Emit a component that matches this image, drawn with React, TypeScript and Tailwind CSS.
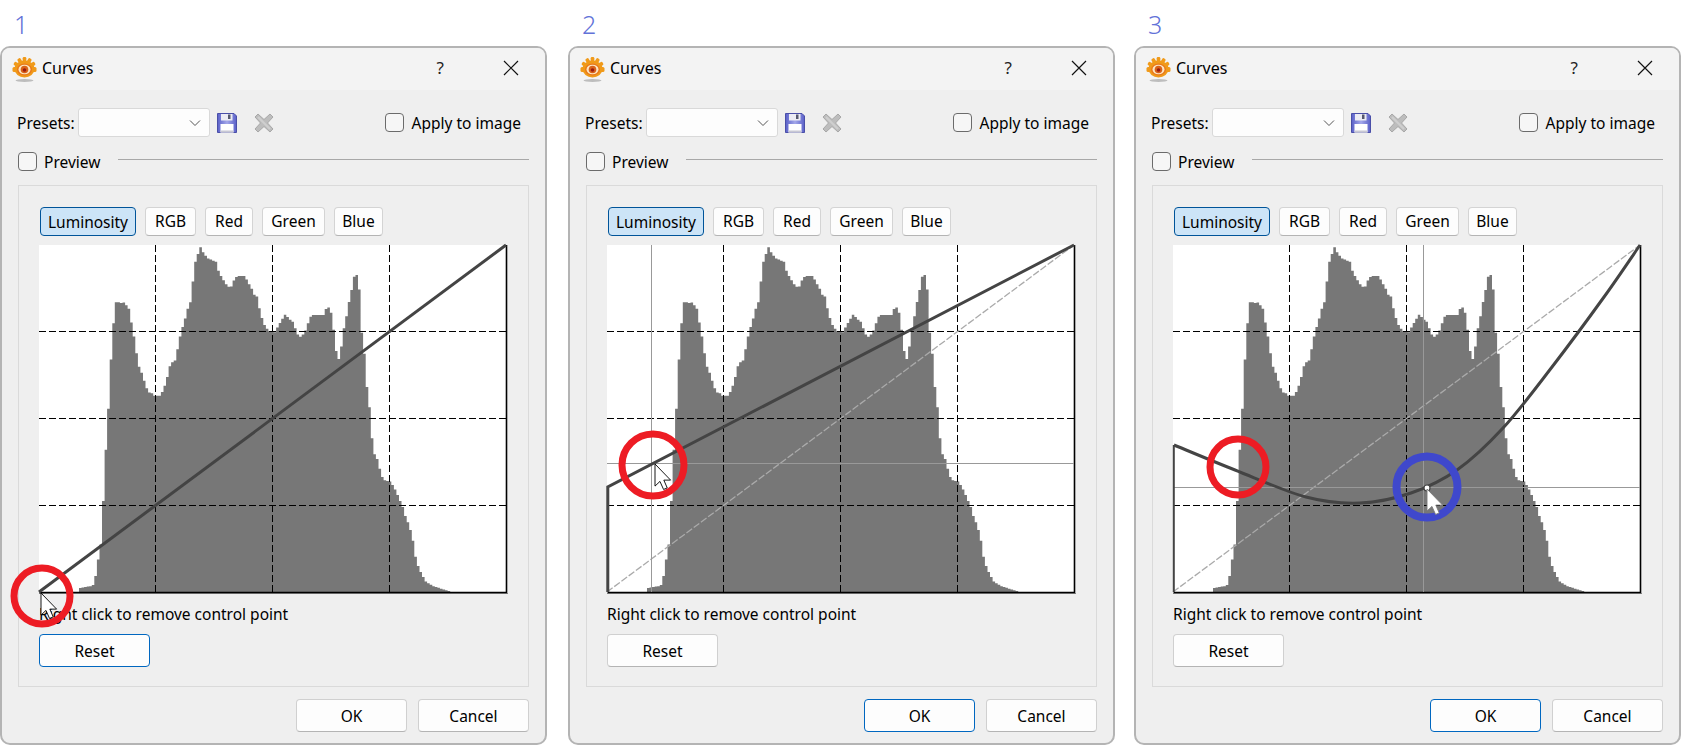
import React from "react";

// histogram outline read off the reference, [x, y] inside a 467x347 plot
const rawHistogram: [number, number][] = [
  [210,1087],[215,1075],[225,1072],[250,1068],[258,1060],[262,1020],[268,985],[275,940],[280,850],[285,740],[290,635],[297,520],[302,410],[307,320],[312,260],[315,217],[330,217],[335,222],[340,216],[345,225],[352,228],[358,265],[365,300],[372,350],[380,405],[390,430],[400,465],[408,487],[420,490],[425,497],[440,497],[450,480],[460,445],[470,400],[485,390],[492,340],[500,305],[510,270],[518,237],[526,215],[533,150],[541,85],[550,65],[556,45],[562,70],[575,85],[590,92],[597,95],[605,125],[615,145],[630,170],[640,170],[650,145],[658,138],[680,138],[685,155],[695,170],[705,195],[712,200],[720,240],[730,280],[745,303],[762,307],[768,295],[780,272],[792,252],[800,265],[812,275],[825,310],[830,323],[840,315],[850,298],[860,262],[868,255],[900,255],[908,228],[915,235],[922,255],[928,310],[937,390],[945,385],[952,310],[960,275],[968,225],[980,165],[985,135],[993,135],[1000,190],[1002,275],[1008,330],[1015,390],[1018,455],[1025,510],[1030,560],[1035,635],[1040,670],[1050,690],[1060,735],[1068,750],[1085,755],[1095,770],[1108,800],[1120,830],[1128,860],[1138,885],[1148,925],[1155,975],[1162,1005],[1172,1030],[1185,1055],[1205,1068],[1225,1075],[1255,1085],[1260,1087],
];

const histogramPoints = rawHistogram.map(([x, y]) => [(x - 108) / 2.8 + 1, (y - 45) / 3]);

function histogramPath() {
  const step = 2.56;
  let d = `M${histogramPoints[0][0]} 347`;
  let i = 0;
  for (let x = histogramPoints[0][0]; x < histogramPoints[histogramPoints.length - 1][0]; x += step) {
    while (i < histogramPoints.length - 2 && histogramPoints[i + 1][0] < x) i++;
    const [x0, y0] = histogramPoints[i];
    const [x1, y1] = histogramPoints[i + 1];
    const y = y0 + ((y1 - y0) * (x - x0)) / (x1 - x0);
    d += `L${x.toFixed(1)} ${y.toFixed(1)}L${(x + step).toFixed(1)} ${y.toFixed(1)}`;
  }
  return d + "L" + histogramPoints[histogramPoints.length - 1][0] + " 347Z";
}

function smoothPath(points: number[][]) {
  let d = `M${points[0][0]} ${points[0][1]}`;
  for (let i = 0; i < points.length - 1; i++) {
    const p0 = points[i - 1] || points[i];
    const p1 = points[i];
    const p2 = points[i + 1];
    const p3 = points[i + 2] || p2;
    d += `C${p1[0] + (p2[0] - p0[0]) / 6} ${p1[1] + (p2[1] - p0[1]) / 6} ${p2[0] - (p3[0] - p1[0]) / 6} ${p2[1] - (p3[1] - p1[1]) / 6} ${p2[0]} ${p2[1]}`;
  }
  return d;
}

const curve3 = smoothPath([[1,200],[62,225],[133,252],[187,258],[238,248],[284,225],[330,183],[379,122],[431,52],[467,0]]);

const histogram = histogramPath();

const Cursor = ({ x, y, scale = 1.3, stroke = "#000" }: { x: number; y: number; scale?: number; stroke?: string }) => (
  <path
    d="M0 0V17L3.8 13.4L6.6 19.6L9.4 18.4L6.8 12.4H12Z"
    transform={`translate(${x} ${y}) scale(${scale})`}
    fill="#fff"
    stroke={stroke}
    strokeWidth={0.7}
  />
);

const Plot = ({ index }: { index: number }) => (
  <svg width={469} height={349} viewBox="0 0 469 349" className="relative z-10 block overflow-visible">
    <rect width={468} height={348} fill="#fff" />
    <path d={histogram} fill="#777777" />
    {[116, 233, 350].map((x) => (
      <line key={x} x1={x + 0.5} x2={x + 0.5} y1={0} y2={347} stroke="#000" strokeDasharray="7 3" />
    ))}
    {[86, 173, 260].map((y) => (
      <line key={y} x1={0} x2={468} y1={y + 0.5} y2={y + 0.5} stroke="#000" strokeDasharray="7 3" />
    ))}
    <path d="M0 348.5H469" stroke="#8a8a8a" />
    <path d="M0.5 347.5H467.5V0" fill="none" stroke="#000" strokeWidth={1.6} />
    {index > 1 && <line x1={0} y1={347} x2={467} y2={0} stroke="#aaaaaa" strokeWidth={1.3} strokeDasharray="7 2" />}
    {index === 1 && <line x1={0} y1={347} x2={467} y2={0} stroke="#444" strokeWidth={3} />}
    {index === 2 && (
      <>
        <path d="M44.5 0V347M0 218.5H467" stroke="#999" />
        <path d="M0.8 347V242L467 0" fill="none" stroke="#444" strokeWidth={3} />
        <circle cx={46} cy={220} r={31} fill="none" stroke="#ed1c24" strokeWidth={7} />
        <Cursor x={48} y={219} />
      </>
    )}
    {index === 3 && (
      <>
        <path d="M250.5 0V347M0 242.5H467" stroke="#999" />
        <path d="M0.8 347V200" fill="none" stroke="#444" strokeWidth={2} />
        <path d={curve3} fill="none" stroke="#444" strokeWidth={3} />
        <circle cx={65} cy={222} r={28} fill="none" stroke="#ed1c24" strokeWidth={7} />
        <circle cx={254} cy={242} r={30.5} fill="none" stroke="#3f48cc" strokeWidth={8} />
        <circle cx={254} cy={243} r={3} fill="#fff" stroke="#444" strokeWidth={1.2} />
        <Cursor x={254} y={244} stroke="#777" />
      </>
    )}
    {index === 1 && (
      <>
        <circle cx={3} cy={351} r={28} fill="none" stroke="#ed1c24" strokeWidth={7} />
        <Cursor x={2} y={348} />
      </>
    )}
  </svg>
);

const AppLogo = () => (
  <svg width={25} height={27} viewBox="0 0 25 27">
    <ellipse cx={12.5} cy={24.5} rx={9} ry={1.5} fill="#bdbdbd" />
    <g fill="#f09a1a">
      <ellipse cx={12.5} cy={13} rx={10} ry={8.5} />
      {[-60, -30, 0, 30, 60].map((a) => (
        <rect key={a} x={10.7} y={1} width={3.6} height={6} rx={1.2} transform={`rotate(${a} 12.5 13)`} />
      ))}
      <rect x={0.5} y={11} width={5} height={5} rx={1.5} />
      <rect x={19.5} y={11} width={5} height={5} rx={1.5} />
    </g>
    <ellipse cx={12.5} cy={13.5} rx={7.5} ry={6} fill="#e9781a" />
    <ellipse cx={12.5} cy={13.5} rx={6} ry={4.8} fill="#fbe6c4" />
    <circle cx={12.5} cy={13.5} r={3.8} fill="#d9621a" />
    <circle cx={12.5} cy={14} r={1.8} fill="#9a1c10" />
  </svg>
);

const SaveIcon = () => (
  <svg width={20} height={20} viewBox="0 0 20 20">
    <defs>
      <linearGradient id="floppy" x1="0" x2="1" y1="0" y2="0">
        <stop offset="0" stopColor="#5a60c8" />
        <stop offset="0.5" stopColor="#a4a8ea" />
        <stop offset="1" stopColor="#5a60c8" />
      </linearGradient>
    </defs>
    <path d="M0.5 0.5H17L19.5 3V19.5H0.5Z" fill="url(#floppy)" stroke="#4a4fa8" />
    <rect x={4} y={1} width={11.5} height={6.5} fill="#ececf4" />
    <rect x={11} y={1.5} width={2.5} height={4.5} fill="#55586e" />
    <rect x={3.5} y={11} width={13} height={8.5} fill="#fff" />
    <rect x={3.5} y={17.5} width={13} height={2} fill="#c8c8d4" />
  </svg>
);

const DeleteIcon = () => (
  <svg width={20} height={20} viewBox="0 0 20 20">
    <path d="M4 1L10 6.5L16 1L19 4L13.5 10L19 16L16 19L10 13.5L4 19L1 16L6.5 10L1 4Z" fill="#bdbdbd" stroke="#a8a8a8" strokeWidth={1} />
    <path d="M4 4L16 16" stroke="#cfcfcf" strokeWidth={2} />
  </svg>
);

const Checkbox = () => <span className="block h-[19px] w-[19px] rounded-[4px] border border-[#6b6b6b] bg-[#f6f6f6]" />;

const TabButton = ({ label, active, width }: { label: string; active?: boolean; width: string }) => (
  <button
    className={
      active
        ? `h-[29px] ${width} rounded-[4px] border border-[#005499] bg-[#cce4f7] pt-[3px]`
        : `h-[29px] ${width} rounded-[4px] border border-[#d4d4d4] border-b-[#b4b4b4] bg-[#fdfdfd] pt-[1px]`
    }
  >
    {label}
  </button>
);

const PushButton = ({ label, focused }: { label: string; focused?: boolean }) => (
  <button
    className={
      focused
        ? "h-[33px] w-[111px] rounded-[4px] border border-[#0067c0] bg-[#fdfdfd] pt-[2px]"
        : "h-[33px] w-[111px] rounded-[4px] border border-[#d0d0d0] border-b-[#b4b4b4] bg-[#fdfdfd] pt-[2px]"
    }
  >
    {label}
  </button>
);

const CurvesDialog = ({ index, width }: { index: number; width: string }) => (
  <div className={`${width} flex h-[699px] shrink-0 flex-col rounded-[10px] border-2 border-[#b4b4b4] bg-[#efefef] text-[15.5px] text-black`}>
    <div className="flex h-[42px] shrink-0 items-center rounded-t-[8px] bg-[#f3f3f3] pl-[10px]">
      <AppLogo />
      <span className="ml-[5px] pb-[3px] text-[16px]">Curves</span>
      <span className="ml-auto pb-[2px] text-[17px] text-[#222]">?</span>
      <svg width={16} height={16} viewBox="0 0 16 16" className="mr-[26px] ml-[59px] mb-[2px]">
        <path d="M1 1L15 15M15 1L1 15" stroke="#111" strokeWidth={1.2} />
      </svg>
    </div>

    <div className="mt-[18px] flex h-[29px] items-center pl-[15px]">
      <span className="pt-[3px]">Presets:</span>
      <div className="ml-[3px] flex h-[29px] w-[132px] items-center justify-end rounded-[3px] border border-[#d9d9d9] bg-[#fdfdfd] pr-[8px]">
        <svg width={12} height={8} viewBox="0 0 12 8">
          <path d="M1 1.5L6 6.5L11 1.5" fill="none" stroke="#555" />
        </svg>
      </div>
      <span className="ml-[7px]">
        <SaveIcon />
      </span>
      <span className="ml-[17px]">
        <DeleteIcon />
      </span>
      <span className="ml-[111px]">
        <Checkbox />
      </span>
      <span className="ml-[8px] pt-[3px]">Apply to image</span>
    </div>

    <div className="mt-[14px] flex h-[20px] items-center pl-[16px] pr-[16px]">
      <Checkbox />
      <span className="ml-[7px] pt-[4px]">Preview</span>
      <div className="mb-[4px] ml-[18px] h-px flex-1 bg-[#a8a8a8]" />
    </div>

    <div className="mx-[16px] mt-[14px] flex h-[502px] flex-col border border-[#dadada] pl-[20px] pt-[21px]">
      <div className="ml-[1px] flex gap-[9px]">
        <TabButton label="Luminosity" active width="w-[96px]" />
        <TabButton label="RGB" width="w-[51px]" />
        <TabButton label="Red" width="w-[48px]" />
        <TabButton label="Green" width="w-[63px]" />
        <TabButton label="Blue" width="w-[49px]" />
      </div>
      <div className="mt-[9px]">
        <Plot index={index} />
      </div>
      <div className="mt-[10px] h-[20px] leading-[20px]">Right click to remove control point</div>
      <div className="mt-[10px]">
        <PushButton label="Reset" focused={index === 1} />
      </div>
    </div>

    <div className="mt-[12px] flex justify-end gap-[11px] pr-[16px]">
      <PushButton label="OK" focused={index !== 1} />
      <PushButton label="Cancel" />
    </div>
  </div>
);

const App = () => (
  <main className="flex h-[747px] w-[1681px] overflow-hidden bg-white font-['Noto_Sans',sans-serif]">
    {[
      { index: 1, width: "w-[547px]", margin: "ml-0" },
      { index: 2, width: "w-[547px]", margin: "ml-[21px]" },
      { index: 3, width: "w-[547px]", margin: "ml-[19px]" },
    ].map((d) => (
      <section key={d.index} className={`${d.margin} flex flex-col`}>
        <div className="h-[46px] pl-[14px] pt-[8px] text-[25px] leading-[32px] font-light text-[#6272d8]">{d.index}</div>
        <CurvesDialog index={d.index} width={d.width} />
      </section>
    ))}
  </main>
);

export default App;
